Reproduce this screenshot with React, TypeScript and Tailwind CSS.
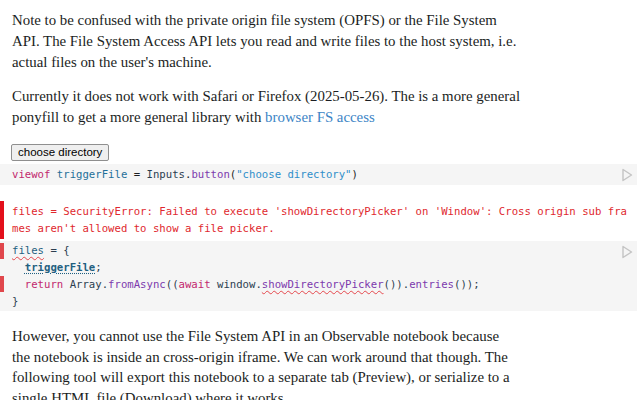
import React from 'react';

const serif = { fontFamily: '"Liberation Serif", serif' };
const mono = { fontFamily: '"DejaVu Sans Mono", monospace' };

const Play: React.FC = () => (
  <svg width="12" height="14" viewBox="0 0 12 14" className="shrink-0">
    <path d="M2 1.5 L10.5 7 L2 12.5 Z" fill="none" stroke="#c4c4c4" strokeWidth="1.4" strokeLinejoin="round" />
  </svg>
);

const squiggle = 'underline decoration-wavy decoration-[#e5484d] decoration-1 underline-offset-2';

const App: React.FC = () => {
  return (
    <div className="w-[640px] h-[400px] overflow-hidden bg-white text-[#1b1e23]">
      <div className="pl-3 pr-3 pt-[10px] text-[14.85px] leading-[21px] whitespace-nowrap" style={serif}>
        <p>
          Note to be confused with the private origin file system (OPFS) or the File System<br />
          API. The File System Access API lets you read and write files to the host system, i.e.<br />
          actual files on the user's machine.
        </p>
        <p className="mt-[13px]">
          Currently it does not work with Safari or Firefox (2025-05-26). The is a more general<br />
          ponyfill to get a more general library with{' '}
          <a className="text-[#3d85c6]">browser FS access</a>
        </p>
      </div>

      <div className="pl-[11px] mt-[10px]">
        <button
          className="h-[17px] px-[6px] text-[11.5px] leading-[15px] text-black bg-[#efefef] border border-[#8f8f8f] rounded-[2px]"
          style={{ fontFamily: '"Liberation Sans", sans-serif' }}
        >
          choose directory
        </button>
      </div>

      <div
        className="mt-[2px] mr-[3px] h-[21px] bg-[#f5f5f5] flex items-center justify-between pl-3 pr-[4px] text-[10.65px] leading-[17px]"
        style={mono}
      >
        <span className="whitespace-pre">
          <span className="text-[#c2286e]">viewof</span> <span className="text-[#1f6f99]">triggerFile</span> = <span className="text-[#2c3e50]">Inputs</span>.<span className="text-[#7c3aad]">button</span>(<span className="text-[#2f8fca]">"choose directory"</span>)
        </span>
        <Play />
      </div>

      <div className="mt-[16px] flex" style={mono}>
        <div className="w-[4px] bg-[#e3101b] shrink-0" />
        <div className="pl-2 py-[2px] text-[10.65px] leading-[17px] text-[#e0282e] whitespace-pre">
          {"files = SecurityError: Failed to execute 'showDirectoryPicker' on 'Window': Cross origin sub fra\nmes aren't allowed to show a file picker."}
        </div>
      </div>

      <div
        className="mt-[2px] mr-[3px] flex bg-[#f5f5f5] text-[10.65px] leading-[17px] text-[#2c3e50]"
        style={mono}
      >
        <div className="w-[4px] shrink-0 flex flex-col pt-[2px]">
          <div className="h-[16px] bg-[#e0474c]" />
          <div className="h-[17px]" />
          <div className="h-[16px] bg-[#e0474c]" />
        </div>
        <div className="flex-1 pl-2 pt-[1px] pb-[1px] whitespace-pre">
          <div><span className={`text-[#1f5f80] ${squiggle}`}>files</span> = {'{'}</div>
          <div>  <span className="font-bold text-[#1f5f80] underline decoration-dotted decoration-[#1f5f80] underline-offset-2">triggerFile</span>;</div>
          <div>  <span className="text-[#c2286e]">return</span> Array.<span className="text-[#7c3aad]">fromAsync</span>((<span className="text-[#c2286e]">await</span> window.<span className={`text-[#7c3aad] ${squiggle}`}>showDirectoryPicker</span>()).<span className="text-[#7c3aad]">entries</span>());</div>
          <div>{'}'}</div>
        </div>
        <div className="pr-[4px] pt-[4px]">
          <Play />
        </div>
      </div>

      <div className="pl-3 pt-[15px] text-[14.85px] leading-[20.5px] whitespace-nowrap" style={serif}>
        <p>
          However, you cannot use the File System API in an Observable notebook because<br />
          the notebook is inside an cross-origin iframe. We can work around that though. The<br />
          following tool will export this notebook to a separate tab (Preview), or serialize to a<br />
          single HTML file (Download) where it works.
        </p>
      </div>
    </div>
  );
};

export default App;
